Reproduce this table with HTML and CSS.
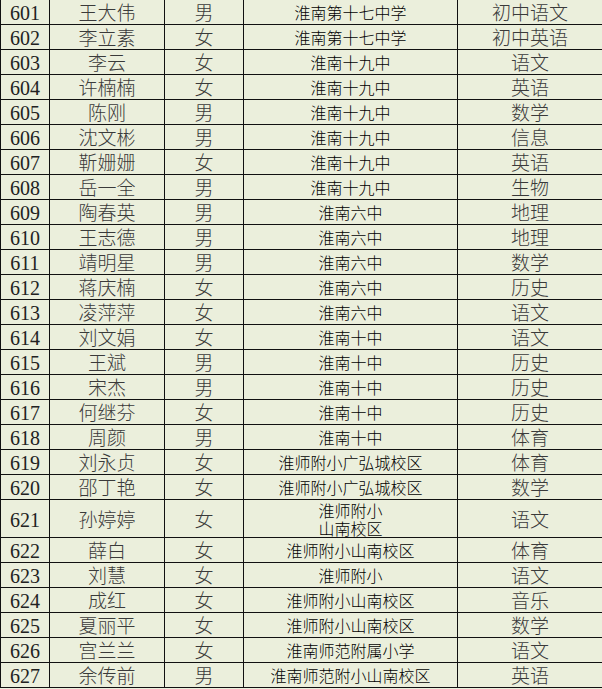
FILE: index.html
```html
<!DOCTYPE html>
<html lang="zh-CN">
<head>
<meta charset="utf-8">
<title>名单</title>
<link rel="stylesheet" href="styles.css">
</head>
<body>
<table class="roster">
<colgroup>
<col class="c-no"><col class="c-name"><col class="c-sex"><col class="c-school"><col class="c-subj">
</colgroup>
<tbody>
<tr><td class="no">601</td><td class="name">王大伟</td><td class="sex">男</td><td class="school">淮南第十七中学</td><td class="subj">初中语文</td></tr>
<tr><td class="no">602</td><td class="name">李立素</td><td class="sex">女</td><td class="school">淮南第十七中学</td><td class="subj">初中英语</td></tr>
<tr><td class="no">603</td><td class="name">李云</td><td class="sex">女</td><td class="school">淮南十九中</td><td class="subj">语文</td></tr>
<tr><td class="no">604</td><td class="name">许楠楠</td><td class="sex">女</td><td class="school">淮南十九中</td><td class="subj">英语</td></tr>
<tr><td class="no">605</td><td class="name">陈刚</td><td class="sex">男</td><td class="school">淮南十九中</td><td class="subj">数学</td></tr>
<tr><td class="no">606</td><td class="name">沈文彬</td><td class="sex">男</td><td class="school">淮南十九中</td><td class="subj">信息</td></tr>
<tr><td class="no">607</td><td class="name">靳姗姗</td><td class="sex">女</td><td class="school">淮南十九中</td><td class="subj">英语</td></tr>
<tr><td class="no">608</td><td class="name">岳一全</td><td class="sex">男</td><td class="school">淮南十九中</td><td class="subj">生物</td></tr>
<tr><td class="no">609</td><td class="name">陶春英</td><td class="sex">男</td><td class="school">淮南六中</td><td class="subj">地理</td></tr>
<tr><td class="no">610</td><td class="name">王志德</td><td class="sex">男</td><td class="school">淮南六中</td><td class="subj">地理</td></tr>
<tr><td class="no">611</td><td class="name">靖明星</td><td class="sex">男</td><td class="school">淮南六中</td><td class="subj">数学</td></tr>
<tr><td class="no">612</td><td class="name">蒋庆楠</td><td class="sex">女</td><td class="school">淮南六中</td><td class="subj">历史</td></tr>
<tr><td class="no">613</td><td class="name">凌萍萍</td><td class="sex">女</td><td class="school">淮南六中</td><td class="subj">语文</td></tr>
<tr><td class="no">614</td><td class="name">刘文娟</td><td class="sex">女</td><td class="school">淮南十中</td><td class="subj">语文</td></tr>
<tr><td class="no">615</td><td class="name">王斌</td><td class="sex">男</td><td class="school">淮南十中</td><td class="subj">历史</td></tr>
<tr><td class="no">616</td><td class="name">宋杰</td><td class="sex">男</td><td class="school">淮南十中</td><td class="subj">历史</td></tr>
<tr><td class="no">617</td><td class="name">何继芬</td><td class="sex">女</td><td class="school">淮南十中</td><td class="subj">历史</td></tr>
<tr><td class="no">618</td><td class="name">周颜</td><td class="sex">男</td><td class="school">淮南十中</td><td class="subj">体育</td></tr>
<tr><td class="no">619</td><td class="name">刘永贞</td><td class="sex">女</td><td class="school">淮师附小广弘城校区</td><td class="subj">体育</td></tr>
<tr><td class="no">620</td><td class="name">邵丁艳</td><td class="sex">女</td><td class="school">淮师附小广弘城校区</td><td class="subj">数学</td></tr>
<tr class="tall"><td class="no">621</td><td class="name">孙婷婷</td><td class="sex">女</td><td class="school">淮师附小<br>山南校区</td><td class="subj">语文</td></tr>
<tr><td class="no">622</td><td class="name">薛白</td><td class="sex">女</td><td class="school">淮师附小山南校区</td><td class="subj">体育</td></tr>
<tr><td class="no">623</td><td class="name">刘慧</td><td class="sex">女</td><td class="school">淮师附小</td><td class="subj">语文</td></tr>
<tr><td class="no">624</td><td class="name">成红</td><td class="sex">女</td><td class="school">淮师附小山南校区</td><td class="subj">音乐</td></tr>
<tr><td class="no">625</td><td class="name">夏丽平</td><td class="sex">女</td><td class="school">淮师附小山南校区</td><td class="subj">数学</td></tr>
<tr><td class="no">626</td><td class="name">宫兰兰</td><td class="sex">女</td><td class="school">淮南师范附属小学</td><td class="subj">语文</td></tr>
<tr><td class="no">627</td><td class="name">余传前</td><td class="sex">男</td><td class="school">淮南师范附小山南校区</td><td class="subj">英语</td></tr>
</tbody>
</table>
</body>
</html>
```
FILE: styles.css
```css
html, body {
  margin: 0;
  padding: 0;
  background: #ebefdc;
}
.roster {
  border-collapse: collapse;
  table-layout: fixed;
  width: 602px;
  background: #ebefdc;
}
.c-no { width: 49px; }
.c-name { width: 115px; }
.c-sex { width: 79px; }
.c-school { width: 214px; }
.c-subj { width: 145px; }
.roster td {
  border: 1px solid #111;
  height: 24px;
  padding: 0;
  text-align: center;
  vertical-align: middle;
  white-space: nowrap;
  overflow: hidden;
  font-family: "Noto Sans CJK SC", sans-serif;
  font-weight: 300;
  color: #3a3a3a;
  line-height: 20px;
}
.roster tr:first-child td {
  border-top: none;
}
.roster tr.tall td {
  height: 37px;
}
.roster td.no {
  font-family: "Liberation Serif", "Noto Sans CJK SC", serif;
  font-weight: 400;
  font-size: 20px;
  color: #222;
  height: 22px;
  padding-top: 2px;
}
.roster tr.tall td.no {
  height: 35px;
}
.name, .sex, .subj {
  font-size: 19px;
}
.roster td.school {
  font-size: 16px;
  font-weight: 300;
  color: #000;
}
.roster tr.tall td.school {
  line-height: 18px;
  padding-top: 1px;
  height: 36px;
}
```
